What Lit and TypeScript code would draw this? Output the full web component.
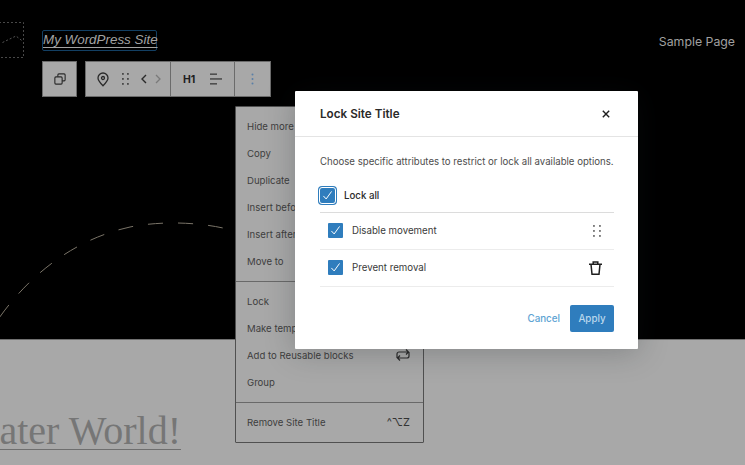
import { LitElement, html, css } from "lit";
import { customElement } from "lit/decorators.js";

const check = html`<svg viewBox="0 0 20 20" width="20" height="20"><path d="M4.5 10.6 L8.2 14.6 L15.4 4.6" fill="none" stroke="#fff" stroke-width="1.3"/></svg>`;

@customElement("app-root")
export class AppRoot extends LitElement {
  static styles = css`
    :host { display: block; width: 745px; height: 465px; position: relative; overflow: hidden; background: #a8a8a8; font-family: "Inter", "Liberation Sans", sans-serif; }
    .hero { background: #000; height: 340px; border-bottom: 1px solid #707070; box-sizing: border-box; position: relative; padding: 22px 0 0 0; }
    .arc { position: absolute; left: 0; top: 0; }
    .head { display: flex; align-items: center; position: relative; }
    .logo { width: 24px; height: 36px; flex: none; }
    .site { margin-left: 18px; height: 21px; width: 115px; box-sizing: border-box; border: 1px solid #123f63; border-radius: 2px; font: italic 13.4px/18px "Liberation Sans", sans-serif; color: #a3a3a3; white-space: nowrap; text-decoration: underline; text-underline-offset: 2.5px; }
    .sample { margin-left: auto; margin-right: 10px; margin-top: 2px; color: #a0a0a0; font: 12.3px "Inter", sans-serif; }
    .tools { display: flex; gap: 8px; margin: 3px 0 0 42px; }
    .tg { display: flex; height: 36px; background: #a8a8a8; border: 1px solid #6b6b6b; box-sizing: border-box; }
    .tb { display: flex; align-items: center; justify-content: center; box-sizing: border-box; height: 34px; }
    .tb + .tb { border-left: 1px solid #6b6b6b; }
    .mover { width: 84px; justify-content: flex-start; padding-left: 11px; }
    .ml13 { margin-left: 13px; }
    .ml12 { margin-left: 12px; }
    .ml8 { margin-left: 8px; }
    .h1 { width: 64px; justify-content: flex-start; padding-left: 12px; font: 700 10.5px "Inter", sans-serif; color: #1e1e1e; }
    .h1 svg { margin-left: 15px; }
    .later { position: absolute; left: -25px; top: 409px; font: 300 40px/44px "Liberation Serif", serif; color: #767676; border-bottom: 1px solid #6e6e6e; height: 40px; white-space: nowrap; }
    .menu { position: absolute; left: 235px; top: 106px; width: 189px; height: 337px; box-sizing: border-box; border: 1px solid #505050; border-radius: 1px; background: #a8a8a8; color: #3e3e3e; font-size: 9.6px; display: flex; flex-direction: column; }
    .sec { box-sizing: border-box; padding: 5.5px 11px 0; display: flex; flex-direction: column; border-bottom: 1px solid #696969; flex: none; }
    .sec:last-child { border-bottom: 0; }
    .s1 { height: 175px; }
    .s2 { height: 121px; }
    .mi { height: 27px; flex: none; display: flex; align-items: center; justify-content: space-between; white-space: nowrap; }
    .mi svg, .kbd { margin-right: 2px; }
    .kbd { font-size: 11px; color: #333; }
    .modal { position: absolute; left: 295px; top: 91px; width: 343px; height: 258px; background: #fff; border-radius: 1px; box-shadow: 0 3px 30px rgba(25,30,35,.25); color: #1e1e1e; box-sizing: border-box; }
    .mh { height: 46px; box-sizing: border-box; border-bottom: 1px solid #e4e4e4; display: flex; align-items: center; justify-content: space-between; padding: 0 28px 0 25px; }
    .mh h1 { font: 600 11.7px "Inter", sans-serif; margin: 0; color: #2a2a2a; }
    .mb { padding: 18px 24px 0 25px; }
    .desc { font-size: 9.63px; color: #4d4d4d; line-height: 14px; white-space: nowrap; }
    .row { display: flex; align-items: center; font-size: 9.7px; color: #3a3a3a; box-sizing: border-box; }
    .all { height: 35px; margin-top: 9px; gap: 9px; font-weight: 500; color: #2a2a2a; border-bottom: 1px solid #dcdcdc; }
    .sub { height: 37px; padding: 0 0 1px 8px; gap: 9px; border-bottom: 1px solid #ececec; }
    .sub svg.ic { margin-left: auto; }
    .grid { margin-right: 13px; }
    .trash { margin-right: 12px; }
    .cb { width: 15px; height: 15px; background: #2f7dbd; border-radius: 1px; display: flex; align-items: center; justify-content: center; flex: none; }
    .cb svg { width: 15px; height: 15px; }
    .all .cb { outline: 1px solid #fff; box-shadow: 0 0 0 2px #2f7dbd; border-radius: 2px; }
    .foot { display: flex; justify-content: flex-end; align-items: center; gap: 10px; margin-top: 18px; }
    .cancel { color: #5da3d3; font-size: 9.8px; font-weight: 500; }
    .apply { width: 44px; height: 27px; background: #2f7dbd; color: #b9d7ec; border-radius: 2px; font-size: 9.8px; font-weight: 500; display: flex; align-items: center; justify-content: center; }
  `;

  private menuItem(t: string, right?: unknown) {
    return html`<div class="mi"><span>${t}</span>${right ?? ""}</div>`;
  }

  render() {
    return html`
      <div class="hero">
        <svg class="arc" width="300" height="340" viewBox="0 0 300 340">
          <path d="M-3 321 C 25 280, 70 240, 130 227 C 160 221, 195 222, 223 228" fill="none" stroke="#7a7468" stroke-width="1" stroke-dasharray="15 15" stroke-dashoffset="-5"/>
        </svg>
        <div class="head">
          <svg class="logo" viewBox="0 0 24 36">
            <rect x="-1" y="0.5" width="24.5" height="35" fill="none" stroke="#5a5a5a" stroke-width="0.8" stroke-dasharray="2 2"/>
            <path d="M2.5 20.5 L16 14 L23 19.5" fill="none" stroke="#6a6a6a" stroke-width="0.8" stroke-dasharray="2 2"/>
          </svg>
          <div class="site">My WordPress Site</div>
          <div class="sample">Sample Page</div>
        </div>
        <div class="tools">
          <div class="tg"><div class="tb" style="width:33px">
            <svg width="12" height="12" viewBox="0 0 14 14" fill="none" stroke="#2a2a2a" stroke-width="1.3"><rect x="1" y="4.5" width="8.5" height="8.5" rx="1.2"/><path d="M4.5 4.5V2.2a1.2 1.2 0 0 1 1.2-1.2H11.8A1.2 1.2 0 0 1 13 2.2V8a1.2 1.2 0 0 1-1.2 1.2H9.5"/></svg>
          </div></div>
          <div class="tg">
            <div class="tb mover">
              <svg width="12" height="15" viewBox="0 0 12 15" fill="none" stroke="#2a2a2a" stroke-width="1.3"><path d="M6 13.8C3 10.8 1 8.6 1 6a5 5 0 0 1 10 0c0 2.6-2 4.8-5 7.8z"/><circle cx="6" cy="6" r="1.5"/></svg>
              <svg class="ml13" width="7" height="12" viewBox="0 0 7 12" fill="#4a4a4a"><rect x="0" y="0" width="1.8" height="1.8"/><rect x="5" y="0" width="1.8" height="1.8"/><rect x="0" y="5" width="1.8" height="1.8"/><rect x="5" y="5" width="1.8" height="1.8"/><rect x="0" y="10" width="1.8" height="1.8"/><rect x="5" y="10" width="1.8" height="1.8"/></svg>
              <svg class="ml12" width="6" height="10" viewBox="0 0 6 10" fill="none" stroke="#2a2a2a" stroke-width="1.4"><path d="M5 1 1 5l4 4"/></svg>
              <svg class="ml8" width="6" height="10" viewBox="0 0 6 10" fill="none" stroke="#7a7a7a" stroke-width="1.3"><path d="M1 1l4 4-4 4"/></svg>
            </div>
            <div class="tb h1">H1
              <svg width="12" height="12" viewBox="0 0 12 12" fill="#3a3a3a"><rect x="0" y="0.5" width="7" height="1.3"/><rect x="0" y="5.3" width="12" height="1.3"/><rect x="0" y="10.2" width="7" height="1.3"/></svg>
            </div>
            <div class="tb" style="width:36px">
              <svg width="3" height="12" viewBox="0 0 3 12" fill="#5a7fa8"><circle cx="1.5" cy="1.5" r="1"/><circle cx="1.5" cy="6" r="1"/><circle cx="1.5" cy="10.5" r="1"/></svg>
            </div>
          </div>
        </div>
      </div>
      <div class="later">Later World!</div>
      <div class="menu">
        <div class="sec s1">
          ${["Hide more settings","Copy","Duplicate","Insert before","Insert after","Move to"].map(t=>this.menuItem(t))}
        </div>
        <div class="sec s2">
          ${this.menuItem("Lock")}
          ${this.menuItem("Make template part")}
          ${this.menuItem("Add to Reusable blocks", html`<svg width="14" height="14" viewBox="0 0 14 14" fill="none" stroke="#2a2a2a" stroke-width="1.2"><path d="M1 10V6a2 2 0 0 1 2-2h9M10 1.5 12.5 4 10 6.5M13 4v4a2 2 0 0 1-2 2H2M4 7.5 1.5 10 4 12.5"/></svg>`)}
          ${this.menuItem("Group")}
        </div>
        <div class="sec">
          ${this.menuItem("Remove Site Title", html`<span class="kbd">^⌥Z</span>`)}
        </div>
      </div>
      <div class="modal">
        <div class="mh"><h1>Lock Site Title</h1>
          <svg width="8" height="8" viewBox="0 0 8 8" stroke="#1e1e1e" stroke-width="1.4"><path d="M.8.8l6.4 6.4M7.2.8.8 7.2"/></svg>
        </div>
        <div class="mb">
          <div class="desc">Choose specific attributes to restrict or lock all available options.</div>
          <div class="row all"><span class="cb">${check}</span>Lock all</div>
          <div class="row sub"><span class="cb">${check}</span>Disable movement
            <svg class="ic grid" width="8" height="12" viewBox="0 0 8 12" fill="#333"><rect x="0.2" y="0.2" width="1.5" height="1.5"/><rect x="6.2" y="0.2" width="1.5" height="1.5"/><rect x="0.2" y="5.2" width="1.5" height="1.5"/><rect x="6.2" y="5.2" width="1.5" height="1.5"/><rect x="0.2" y="10.2" width="1.5" height="1.5"/><rect x="6.2" y="10.2" width="1.5" height="1.5"/></svg>
          </div>
          <div class="row sub"><span class="cb">${check}</span>Prevent removal
            <svg class="ic trash" width="13" height="14" viewBox="0 0 13 14" fill="none" stroke="#1e1e1e" stroke-width="1.5"><path d="M0 3.2h13M4.2 3.2V.9h4.6v2.3M2 3.2l1 10h7l1-10"/></svg>
          </div>
          <div class="foot"><span class="cancel">Cancel</span><span class="apply">Apply</span></div>
        </div>
      </div>
    `;
  }
}
